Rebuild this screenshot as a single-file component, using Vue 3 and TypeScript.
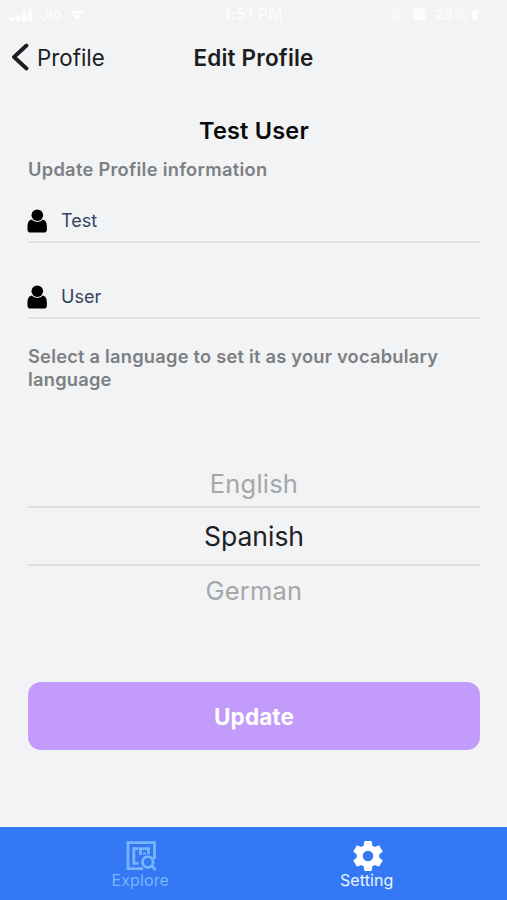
<script setup lang="ts">
import { ref } from 'vue'

interface Field {
  id: string
  label: string
  value: string
}

const fields = ref<Field[]>([
  { id: 'first', label: 'First name', value: 'Test' },
  { id: 'last', label: 'Last name', value: 'User' },
])
const languages: string[] = ['English', 'Spanish', 'German']
const selected = ref<string>('Spanish')
</script>

<template>
  <main class="screen">
    <div class="status">
      <div class="status-left">
        <svg class="signal" viewBox="0 0 23 14">
          <rect x="0" y="9" width="4.5" height="4" rx="1" />
          <rect x="6" y="7" width="4.5" height="6" rx="1" />
          <rect x="12" y="4" width="4.5" height="9" rx="1" />
          <rect x="18" y="1" width="4.5" height="12" rx="1" />
        </svg>
        <span class="carrier">Jio</span>
        <svg class="wifi" viewBox="0 0 14 12">
          <path d="M0 4Q7-2 14 4L12 6Q7 2 2 6ZM3 7Q7 4 11 7L7 11Z" />
        </svg>
      </div>
      <span class="clock">1:51 PM</span>
      <div class="status-right">
        <svg class="lock" viewBox="0 0 14 14">
          <circle cx="7" cy="7" r="5.8" />
          <path d="M4.5 7.2h5v3h-5zM5.5 7V5.5a1.5 1.5 0 0 1 3 0V7" />
        </svg>
        <svg class="alarm" viewBox="0 0 13 13"><rect x=".5" y=".5" width="12" height="12" rx="3" /></svg>
        <span class="percent">23%</span>
        <svg class="battery" viewBox="0 0 25 12">
          <rect class="shell" x=".5" y=".5" width="23" height="11" rx="3" />
          <rect x="0" y="1" width="6" height="10" rx="2" />
        </svg>
      </div>
    </div>

    <header class="nav">
      <button class="back" type="button">
        <svg class="chevron" viewBox="0 0 18 30"><path d="M14.500 3.500 2 15l12.500 11.500" /></svg>
        <span>Profile</span>
      </button>
      <h1 class="title">Edit Profile</h1>
      <span></span>
    </header>

    <section class="content">
      <h2 class="name">Test User</h2>
      <p class="caption info">Update Profile information</p>
      <div v-for="field in fields" :key="field.id" class="field">
        <svg class="person" viewBox="0 0 20 24">
          <ellipse cx="10.300" cy="6.200" rx="5.800" ry="5.800" />
          <path d="M4.500 10.600C1.300 11.500 .5 14.500 .5 18v2.500Q.5 23.600 3.500 23.600h13.400q3 0 3-3.100V18c0-3.500-.8-6.500-4-7.400Q13.800 13 10.300 13t-5.800-2.400Z" />
        </svg>
        <input v-model="field.value" class="input" type="text" :aria-label="field.label" />
      </div>
      <p class="caption language-caption">Select a language to set it as your vocabulary language</p>

      <div class="picker">
        <button
          v-for="language in languages"
          :key="language"
          type="button"
          class="option"
          :class="{ active: language === selected }"
          @click="selected = language"
        >{{ language }}</button>
      </div>
      <button class="update" type="button">Update</button>
    </section>

    <nav class="tabs">
      <a class="tab explore">
        <svg class="explore-icon" viewBox="0 0 32 32">
          <path d="M19 28.700H4V2.700h26.500V19" />
          <path d="M14.500 8.700H9.800v14.600h4.700M16.500 15V8.700h8v5.500M20.500 14.500v-2" />
          <circle cx="23.800" cy="22" r="5.300" />
          <path d="m27.500 25.800 4.300 4.300" />
        </svg>
        <span>Explore</span>
      </a>
      <a class="tab">
        <svg class="gear" viewBox="2 2 20 20">
          <path d="M19.430 12.980c.040-.320.070-.640.070-.980s-.030-.660-.070-.980l2.110-1.650c.190-.150.240-.420.120-.640l-2-3.460c-.120-.220-.390-.300-.610-.220l-2.490 1c-.520-.400-1.080-.730-1.690-.980l-.380-2.650C14.460 2.180 14.250 2 14 2h-4c-.250 0-.460.180-.490.420l-.380 2.650c-.610.250-1.170.590-1.690.980l-2.490-1c-.230-.090-.490 0-.610.220l-2 3.460c-.130.220-.070.490.120.640l2.110 1.650c-.040.320-.070.650-.070.980s.030.660.070.980l-2.110 1.650c-.190.150-.240.420-.120.640l2 3.460c.120.220.390.300.610.220l2.490-1c.520.400 1.080.730 1.690.980l.380 2.650c.030.240.240.420.490.420h4c.250 0 .460-.180.490-.420l.380-2.650c.610-.250 1.170-.590 1.690-.980l2.490 1c.230.090.490 0 .610-.220l2-3.460c.120-.220.070-.490-.120-.640l-2.110-1.650ZM12 15.500a3.500 3.500 0 1 1 0-7 3.500 3.500 0 0 1 0 7Z" />
        </svg>
        <span>Setting</span>
      </a>
    </nav>
  </main>
</template>

<style>
body {
  background: #f1f3f5;
}
</style>

<style scoped>
.screen {
  display: flex;
  flex-direction: column;
  height: 900px;
  overflow: hidden;
  background: #f1f3f5;
  color: #1c1d20;
  font-family: Inter, 'Liberation Sans', sans-serif;
}
button,
input {
  padding: 0;
  border: 0;
  background: none;
  color: inherit;
  font-family: inherit;
}
h1,
h2,
p {
  margin: 0;
}
.status {
  display: grid;
  grid-template-columns: 1fr auto 1fr;
  align-items: center;
  height: 29px;
  padding: 0 10px;
  color: #fcfdfd;
  font-size: 15px;
  font-weight: 500;
  box-sizing: border-box;
}
.clock {
  font-size: 15.5px;
  letter-spacing: 0.5px;
}
.status svg {
  fill: #fcfdfd;
}
.status-left,
.status-right {
  display: flex;
  align-items: center;
}
.status-right {
  justify-content: flex-end;
}
.signal {
  width: 23px;
  height: 14px;
}
.carrier {
  margin: 0 9px 0 7px;
}
.wifi {
  width: 14px;
  height: 12px;
}
.status .lock {
  width: 14px;
  height: 14px;
  margin-right: 9px;
  fill: none;
  stroke: #fcfdfd;
}
.alarm {
  width: 13px;
  height: 13px;
  margin-right: 8px;
}
.battery {
  width: 25px;
  height: 12px;
  margin-left: 4px;
}
.status .battery .shell {
  fill: none;
  stroke: #f3f5f7;
}
.nav {
  display: grid;
  grid-template-columns: 1fr auto 1fr;
  align-items: center;
  height: 56px;
  padding: 0 12px;
}
.back {
  display: flex;
  align-items: center;
  gap: 7px;
  font-size: 22.300px;
}
.chevron {
  width: 18px;
  height: 30px;
  fill: none;
  stroke: #1c1d20;
  stroke-width: 3.8;
  stroke-linecap: round;
  stroke-linejoin: round;
}
.title {
  font-size: 22.500px;
  font-weight: 600;
  letter-spacing: 0.2px;
}
.content {
  display: flex;
  flex-direction: column;
  flex: 1;
  padding: 30px 27px 0 28px;
}
.name {
  color: #08090b;
  font-size: 23.500px;
  font-weight: 600;
  line-height: 32px;
  letter-spacing: 0.2px;
  text-align: center;
}
.caption {
  color: #7d7f82;
  font-size: 18.300px;
  font-weight: 600;
  line-height: 23px;
  letter-spacing: 0.22px;
}
.info {
  margin-top: 11px;
  letter-spacing: 0.28px;
}
.field {
  display: flex;
  align-items: center;
  gap: 14px;
  height: 41px;
  margin-top: 21px;
  padding-bottom: 2px;
  border-bottom: 2px solid #dfe1e3;
  box-sizing: border-box;
}
.field + .field {
  margin-top: 35px;
}
.person {
  width: 20px;
  height: 24px;
  margin: 1px 0 0 -1px;
  fill: #000;
}
.input {
  flex: 1;
  min-width: 0;
  color: #34425f;
  font-size: 18px;
}
.language-caption {
  margin-top: 26px;
}
.picker {
  display: flex;
  flex-direction: column;
  margin-top: 68px;
}
.option {
  height: 47px;
  padding-top: 1px;
  color: #a5a7a9;
  font-size: 25.500px;
  letter-spacing: 0.2px;
}
.option.active {
  height: 60px;
  padding-top: 0;
  border-top: 2px solid #dcdee0;
  border-bottom: 2px solid #dcdee0;
  color: #1e2023;
  font-size: 26.500px;
  letter-spacing: 0;
}
.update {
  height: 68px;
  margin-top: 69px;
  border-radius: 13px;
  background: #c39bfa;
  color: #fff;
  font-size: 22.500px;
  font-weight: 700;
  letter-spacing: 0.1px;
}
.tabs {
  display: flex;
  height: 73px;
  padding: 0 27px;
  background: #3478f6;
}
.tab {
  display: flex;
  flex: 1;
  flex-direction: column;
  align-items: center;
  padding-top: 13px;
  color: #e8f7ff;
  font-size: 16px;
  line-height: 17px;
}
.tab span {
  letter-spacing: 0.1px;
}
.explore {
  color: #78b5fa;
}
.explore-icon {
  width: 32px;
  height: 32px;
  fill: none;
  stroke: currentColor;
  stroke-width: 2.8;
}
.gear {
  width: 30px;
  height: 30px;
  margin: 1px 0 1px 2px;
  fill: #fff;
}
</style>
